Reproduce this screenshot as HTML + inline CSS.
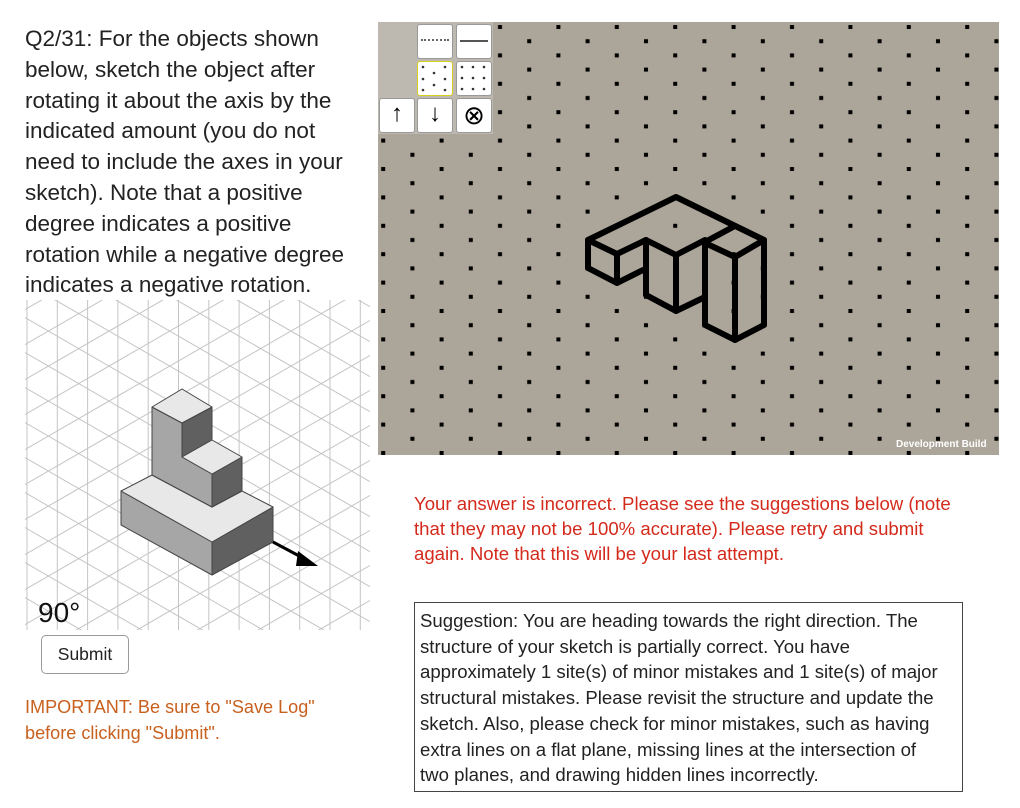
<!DOCTYPE html>
<html><head><style>
html,body{margin:0;width:1020px;height:808px;overflow:hidden}
body{background:#fff;font-family:"Liberation Sans",sans-serif;position:relative}
.q{position:absolute;left:25px;top:24px;font-size:22.5px;line-height:30.8px;color:#222;white-space:nowrap}
.red{position:absolute;left:414px;top:491px;font-size:18.6px;line-height:25px;color:#d42a1c;white-space:nowrap}
.sug{position:absolute;left:414px;top:602px;width:549px;height:190px;box-sizing:border-box;border:1px solid #444;padding:5px 5px;font-size:18.6px;line-height:25.7px;color:#222;white-space:nowrap;overflow:hidden}
.btn{position:absolute;left:41px;top:635px;width:86px;height:37px;border:1px solid #999;border-radius:5px;font-size:17.5px;line-height:37px;text-align:center;color:#222}
.imp{position:absolute;left:25px;top:694px;font-size:18.1px;line-height:26px;color:#c8601e;white-space:nowrap}
.tb{position:absolute;background:#fff;border:1px solid #999;border-radius:3px}
</style></head><body>
<div class="q">Q2/31: For the objects shown<br>below, sketch the object after<br>rotating it about the axis by the<br>indicated amount (you do not<br>need to include the axes in your<br>sketch). Note that a positive<br>degree indicates a positive<br>rotation while a negative degree<br>indicates a negative rotation.</div>

<svg style="position:absolute;left:0;top:0" width="380" height="640">
<defs><clipPath id="c"><rect x="25" y="300" width="345" height="330"/></clipPath></defs>
<rect x="25" y="300" width="345" height="330" fill="#fff"/>
<g clip-path="url(#c)" stroke="#c4c4c4" stroke-width="1">
<path d="M27 300V630M57.3 300V630M87.6 300V630M117.9 300V630M148.2 300V630M178.5 300V630M208.8 300V630M239.1 300V630M269.4 300V630M299.7 300V630M330 300V630M360.3 300V630"/>
<path d="M-300 130L400 534M-300 165L400 569M-300 200L400 604M-300 235L400 639M-300 270L400 674M-300 305L400 709M-300 340L400 744M-300 375L400 779M-300 410L400 814M-300 445L400 849M-300 480L400 884M-300 515L400 919M-300 550L400 954M-300 95L400 499M-300 60L400 464M-300 25L400 429M-300 -10L400 394M-300 -45L400 359M-300 -80L400 324M-300 -115L400 289
M700 130L0 534M700 165L0 569M700 200L0 604M700 235L0 639M700 270L0 674M700 305L0 709M700 340L0 744M700 375L0 779M700 410L0 814M700 445L0 849M700 480L0 884M700 515L0 919M700 550L0 954M700 95L0 499M700 60L0 464M700 25L0 429M700 -10L0 394M700 -45L0 359M700 -80L0 324M700 -115L0 289"/>
</g>
<g stroke="#444" stroke-width="1" stroke-linejoin="round">
<polygon points="121,491 212,542 212,575 121,525" fill="#a6a6a6"/>
<polygon points="212,542 273,507 273,542 212,575" fill="#606060"/>
<polygon points="121,491 152,475 212,507 242,491 273,507 212,542" fill="#e8e8e8"/>
<polygon points="152,407 182,423 182,457 212,474 212,507 152,475" fill="#a6a6a6"/>
<polygon points="182,423 212,407 212,440 182,457" fill="#606060"/>
<polygon points="212,474 242,457 242,491 212,507" fill="#606060"/>
<polygon points="152,407 182,389 212,407 182,423" fill="#e8e8e8"/>
<polygon points="182,457 212,440 242,457 212,474" fill="#e8e8e8"/>
</g>
<line x1="273" y1="542" x2="303" y2="558" stroke="#000" stroke-width="3"/>
<polygon points="298,551 318,566 296,566" fill="#000"/>
<text x="38" y="622" font-size="28" fill="#111">90°</text>
</svg>

<svg style="position:absolute;left:378px;top:22px" width="621" height="433">
<defs><pattern id="d" patternUnits="userSpaceOnUse" width="58.4" height="28.4"><rect x="3.2" y="3" width="4" height="4" fill="#000"/><rect x="32.4" y="17.2" width="4" height="4" fill="#000"/></pattern></defs>
<rect width="621" height="433" fill="#aca599"/>
<rect width="621" height="433" fill="url(#d)"/>
<rect x="0" y="0" width="115" height="112" fill="#bdb8b0"/>
<g transform="translate(-378,-22)" fill="none" stroke="#000" stroke-width="6" stroke-linejoin="round" stroke-linecap="round">
<polyline points="588,240 676,197 764,240 764,325 735,340 705,325 705,243"/>
<polyline points="705,243 735,257 764,240"/><line x1="735" y1="257" x2="735" y2="340"/><line x1="733" y1="227" x2="705" y2="242"/>
<polyline points="588,240 588,268 617,283 617,254 588,240"/><line x1="617" y1="254" x2="646" y2="240"/><line x1="617" y1="283" x2="643" y2="270"/>
<polyline points="646,240 646,295 676,311 705,297"/><polyline points="646,240 676,255 705,240"/><line x1="676" y1="255" x2="676" y2="311"/>
</g>
<text x="518" y="425" font-size="10" font-weight="bold" fill="#fff">Development Build</text>
</svg>
<div class="tb" style="left:417px;top:24px;width:34px;height:33px"><div style="margin:14px 3px 0;border-top:2px dotted #666"></div></div>
<div class="tb" style="left:456px;top:24px;width:34px;height:33px"><div style="margin:15px 3px 0;border-top:2px solid #555"></div></div>
<div class="tb" style="left:417px;top:61px;width:34px;height:33px;border-color:#d8d020"></div>
<div class="tb" style="left:456px;top:61px;width:34px;height:33px"></div>
<div class="tb" style="left:379px;top:98px;width:34px;height:33px;font-size:24px;text-align:center;line-height:30px">↑</div>
<div class="tb" style="left:417px;top:98px;width:34px;height:33px;font-size:24px;text-align:center;line-height:30px">↓</div>
<div class="tb" style="left:456px;top:98px;width:34px;height:33px;font-size:26px;text-align:center;line-height:32px">⊗</div>
<svg style="position:absolute;left:0;top:0" width="1020" height="200">
<g fill="#333"><circle cx="423" cy="67" r="1.3"/><circle cx="445" cy="67" r="1.3"/><circle cx="434" cy="73" r="1.3"/><circle cx="423" cy="79" r="1.3"/><circle cx="445" cy="79" r="1.3"/><circle cx="434" cy="85" r="1.3"/><circle cx="423" cy="90" r="1.3"/><circle cx="445" cy="90" r="1.3"/>
<circle cx="462" cy="67" r="1.3"/><circle cx="473" cy="67" r="1.3"/><circle cx="484" cy="67" r="1.3"/><circle cx="462" cy="78" r="1.3"/><circle cx="473" cy="78" r="1.3"/><circle cx="484" cy="78" r="1.3"/><circle cx="462" cy="89" r="1.3"/><circle cx="473" cy="89" r="1.3"/><circle cx="484" cy="89" r="1.3"/></g>
</svg>

<div class="red">Your answer is incorrect. Please see the suggestions below (note<br>that they may not be 100% accurate). Please retry and submit<br>again. Note that this will be your last attempt.</div>
<div class="sug">Suggestion: You are heading towards the right direction. The<br>structure of your sketch is partially correct. You have<br>approximately 1 site(s) of minor mistakes and 1 site(s) of major<br>structural mistakes. Please revisit the structure and update the<br>sketch. Also, please check for minor mistakes, such as having<br>extra lines on a flat plane, missing lines at the intersection of<br>two planes, and drawing hidden lines incorrectly.</div>
<div class="btn">Submit</div>
<div class="imp">IMPORTANT: Be sure to "Save Log"<br>before clicking "Submit".</div>
</body></html>
